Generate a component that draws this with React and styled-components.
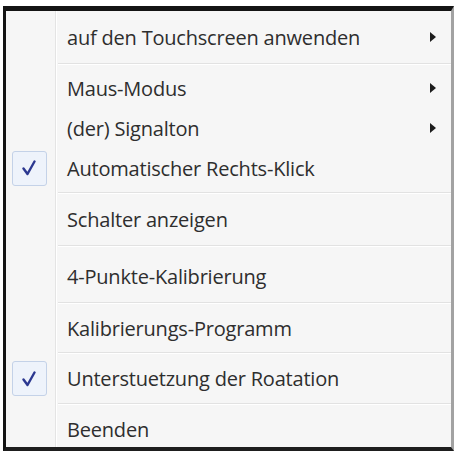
import React from 'react'
import styled, { createGlobalStyle } from 'styled-components'

const GlobalStyle = createGlobalStyle`
  html, body {
    margin: 0;
    padding: 0;
    background: #ffffff;
  }
  body {
    font-family: "Open Sans", "Noto Sans", "Liberation Sans", sans-serif;
  }
`

const Page = styled.div`
  width: 456px;
  height: 451px;
  padding: 6px 2px 0 3px;
  box-sizing: border-box;
`

const Menu = styled.div`
  position: relative;
  height: 445px;
  box-sizing: border-box;
  border-top: 5px solid #141414;
  border-left: 3px solid #141414;
  border-bottom: 4px solid #1e1e1e;
  border-right: 3px solid #a2a2a2;
  background: #f6f6f6;
  display: flex;
  flex-direction: column;
`

const Gutter = styled.div`
  position: absolute;
  top: 0;
  bottom: 0;
  left: 49px;
  width: 1px;
  background: #e4e4e4;
  border-right: 1px solid #ffffff;
`

const Section = styled.div`
  display: flex;
  flex-direction: column;
  padding: ${p => p.$pad || '0'};
`

const Item = styled.div`
  height: ${p => p.$h}px;
  box-sizing: border-box;
  padding-top: ${p => p.$shift || 0}px;
  display: grid;
  grid-template-columns: 50px 1fr 37px;
  align-items: center;
`

const Icon = styled.div`
  display: flex;
  align-items: center;
  justify-content: center;
  height: 100%;
`

const Check = styled.div`
  width: 35px;
  height: 35px;
  margin-left: -4px;
  box-sizing: border-box;
  border: 1px solid #c4d2e8;
  border-radius: 3px;
  background: #eef3fb;
  display: flex;
  align-items: center;
  justify-content: center;
`

const Label = styled.span`
  padding-left: 11px;
  font-size: 20px;
  font-weight: 500;
  color: #2e2e2e;
  white-space: nowrap;
  letter-spacing: -0.2px;
`

const Arrow = styled.span`
  width: 0;
  height: 0;
  border-top: 5px solid transparent;
  border-bottom: 5px solid transparent;
  border-left: 6px solid #1c1c1c;
`

const Separator = styled.div`
  margin-left: 52px;
  height: 1px;
  background: #e2e2e2;
  border-bottom: 1px solid #ffffff;
`

const CheckMark = () => (
  <svg width="14" height="16" viewBox="0 0 14 16">
    <path
      d="M1.5 8.5 L5.5 14 L12.5 1.5"
      fill="none"
      stroke="#2c3890"
      strokeWidth="2.4"
      strokeLinejoin="round"
      strokeLinecap="round"
    />
  </svg>
)

const sections = [
  { pad: '0', items: [{ text: 'auf den Touchscreen anwenden', sub: true, h: 52 }] },
  {
    pad: '3px 0 4px',
    items: [
      { text: 'Maus-Modus', sub: true, h: 40 },
      { text: '(der) Signalton', sub: true, h: 40 },
      { text: 'Automatischer Rechts-Klick', checked: true, h: 40 },
    ],
  },
  { pad: '0', items: [{ text: 'Schalter anzeigen', h: 51 }] },
  { pad: '0', items: [{ text: '4-Punkte-Kalibrierung', h: 55, shift: 4 }] },
  { pad: '0', items: [{ text: 'Kalibrierungs-Programm', h: 48 }] },
  { pad: '0', items: [{ text: 'Unterstuetzung der Roatation', checked: true, h: 49 }] },
  { pad: '0', items: [{ text: 'Beenden', h: 42, shift: 6 }] },
]

export default function App() {
  return (
    <>
      <GlobalStyle />
      <Page>
        <Menu>
          <Gutter />
          {sections.map((section, i) => (
            <React.Fragment key={i}>
              {i > 0 && <Separator />}
              <Section $pad={section.pad}>
                {section.items.map(item => (
                  <Item key={item.text} $h={item.h} $shift={item.shift}>
                    <Icon>
                      {item.checked && (
                        <Check>
                          <CheckMark />
                        </Check>
                      )}
                    </Icon>
                    <Label>{item.text}</Label>
                    <Icon>{item.sub && <Arrow />}</Icon>
                  </Item>
                ))}
              </Section>
            </React.Fragment>
          ))}
        </Menu>
      </Page>
    </>
  )
}
